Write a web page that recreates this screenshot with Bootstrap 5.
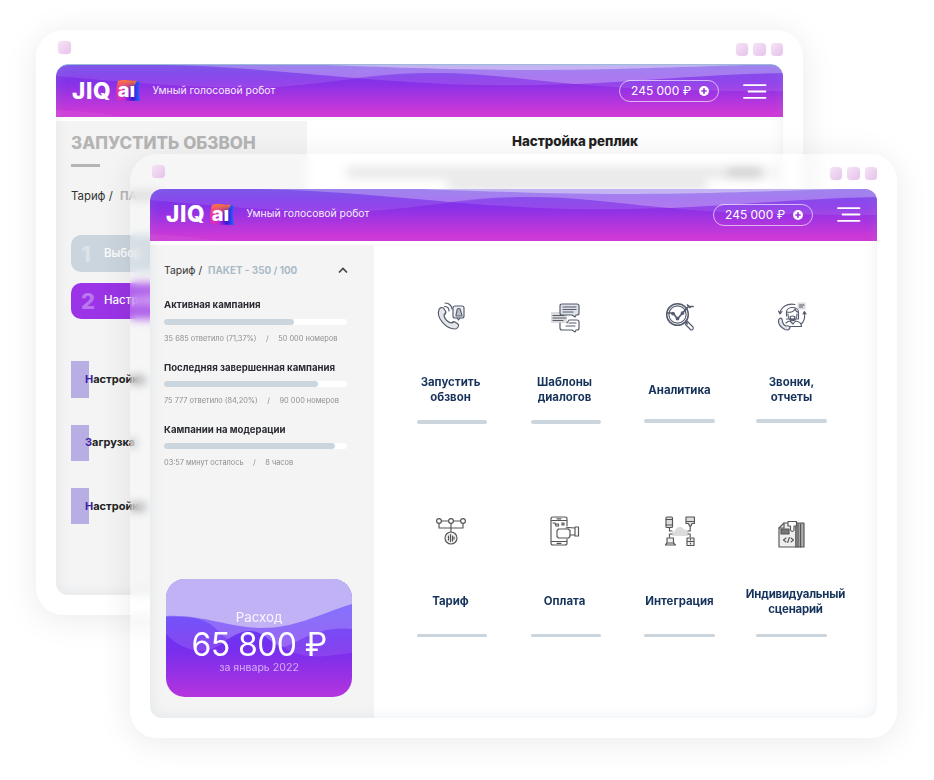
<!DOCTYPE html>
<html lang="ru">
<head>
<meta charset="utf-8">
<meta name="viewport" content="width=device-width, initial-scale=1">
<title>JIQ ai</title>
<link href="https://cdn.jsdelivr.net/npm/bootstrap@5.3.0/dist/css/bootstrap.min.css" rel="stylesheet">
<style>
body{width:934px;height:780px;overflow:hidden;background:#fff;font-family:Inter,"Open Sans",sans-serif;position:relative;line-height:1}
.win{position:absolute;width:767px;height:585px;border-radius:27px;padding:0 20px 20px}
.win-back{left:36px;top:30px;background:#fff;box-shadow:0 4px 34px rgba(0,0,0,.085)}
.win-front{left:130px;top:154px;height:584px;background:rgba(255,255,255,.2);-webkit-backdrop-filter:blur(5px);backdrop-filter:blur(5px);box-shadow:0 4px 34px rgba(0,0,0,.085)}
.chrome{height:35px;padding:11px 0 0 2px}
.win-front .chrome{height:34.5px}
.dot{width:12.5px;height:12.5px;border-radius:4px;background:linear-gradient(135deg,#f5e4f5,#e6c2ec);box-shadow:0 0 1px #f0d8f2}
.chrome .trio{gap:4.8px;padding-top:2px}
.screen{height:530px;border-radius:12px;overflow:hidden;background:#fff;position:relative}
.win-front .screen{height:529.5px}
.screen::after{content:"";position:absolute;inset:0;border-radius:12px;box-shadow:inset 0 0 14px rgba(150,170,190,.2);pointer-events:none}
.win-back .screen{box-shadow:0 -1px 0 -.3px #7aa6cf}
.topbar{height:52px;color:#fff;position:relative;padding:1px 16px 0 16px;border-bottom:1px solid #dc9be6}
.topbar .waves{position:absolute;left:0;top:0}
.topbar>div{position:relative}
.logo-text{font-weight:800;font-size:22.5px;letter-spacing:.7px;width:40px}
.logo-ai{width:25px;height:22px;margin-left:3px}
.slogan{font-size:10.4px;margin-left:12.5px;opacity:.92}
.balance{width:100px;height:22px;border:1.4px solid rgba(255,255,255,.62);border-radius:12px;font-size:12px;padding-left:11px;margin-left:auto}
.burger{margin-left:24px;width:24px}
.side{background:#f4f4f4;margin-top:4px}
.side-back{width:251px;padding:13px 15px 0}
.side-front{width:224px;padding:0 14px}
.hd{font-weight:800;font-size:17px;line-height:18px;color:#b5b5b5;white-space:nowrap}
.rule{width:29px;height:2.5px;background:#b5b5b5;margin-top:12px}
.plan{font-size:11.4px;color:#333;white-space:nowrap}
.step{height:36.5px;width:200px;border-radius:10px;color:#fff;font-size:11.5px;font-weight:500}
.step b{font-size:22px;font-weight:800;width:33px;padding-left:10px;opacity:.32}
.s1{background:#cad5de}.s2{background:#9a34e6}
.pick{height:36.5px;margin-bottom:26.7px;font-size:11px;font-weight:700;color:#222}
.pick i{width:18px;height:36.5px;background:#b9aee3;margin-right:-4px}
.pick span::first-letter{color:#3a1ea8}
.ttl{font-size:13.3px;font-weight:800;color:#222}
.faint{background:#e2e2e2;height:11px}
.faint.first{background:linear-gradient(90deg,#e2e2e2 88%,#c4c4c4 89%,#c4c4c4 96%,#f2f2f2 97%);margin:19px 0 0 -20px;width:430px}
.faint.second{margin:2px 0 0 80px;width:260px}
.camp{font-weight:700;font-size:9.6px;color:#2a2c33;white-space:nowrap;margin-top:19.500px}
.meter{height:6px;background:#fff;border-radius:3px;width:183px;margin-top:9px}
.meter div{height:6px;background:#cad5de;border-radius:3px}
.det{font-size:7.4px;line-height:8px;color:#8e8e8e;white-space:nowrap;margin-top:10px}
.det i{font-style:normal;margin:0 9.5px}
.spend{width:186px;height:118.5px;border-radius:19px;overflow:hidden;position:absolute;left:16px;bottom:21px;color:#fff;text-align:center}
.spend svg.bg{position:absolute;left:0;top:0}
.spend>div{position:relative}
.tiles{display:grid;grid-template-columns:114px 114px 113px 111px;grid-template-rows:215px 215px;padding:47px 0 0 21px}
.tile{text-align:center}
.tile .ic{height:56px;display:flex;align-items:center;justify-content:center}
.tile .cap{height:45px;margin-top:24px;display:flex;align-items:center;justify-content:center;font-weight:700;font-size:11.4px;line-height:14.7px;color:#16335b;white-space:nowrap}
.tile .ul{width:70.5px;height:3.6px;border-radius:2px;background:#cad5de;margin:7.5px auto 0}
.tile.up .ul{margin-top:6.500px}
.tile.g .cap{margin-top:20.5px}
.tile.g .ul{margin-top:9.5px}
.tile .nudge{margin-right:3px}
.tile svg{fill:none;stroke:#545b6c;stroke-width:1.15;stroke-linecap:round;stroke-linejoin:round}
.tile.g svg{stroke:#555}
.tile.g .ic{padding-top:1px}
.tile.wide .cap{padding-left:8px;letter-spacing:-.2px}
</style>
</head>
<body>
<svg width="0" height="0" class="position-absolute">
<defs>
<linearGradient id="hg" x1="0" y1="0" x2="0" y2="1"><stop offset="0" stop-color="#6c3cec"/><stop offset=".35" stop-color="#8731e8"/><stop offset=".92" stop-color="#cd39d6"/></linearGradient>
<linearGradient id="cg" x1="0" y1="0" x2="0" y2="1"><stop offset=".28" stop-color="#5c3cfa"/><stop offset=".6" stop-color="#782eee"/><stop offset="1" stop-color="#b634dc"/></linearGradient>
<linearGradient id="lg" x1="0" y1="0" x2="1" y2="0"><stop offset="0" stop-color="#f0309c"/><stop offset=".35" stop-color="#c02cd8"/><stop offset=".7" stop-color="#3a14d8"/><stop offset="1" stop-color="#1c6cff"/></linearGradient>
<linearGradient id="lt" x1="0" y1="0" x2="0" y2="1"><stop offset="0" stop-color="#ff7a30"/><stop offset="1" stop-color="#ff5a50" stop-opacity="0"/></linearGradient>
<symbol id="waves" viewBox="0 0 727 52"><rect width="727" height="52" fill="url(#hg)"/>
<g fill="#fff"><path fill-opacity=".1" d="M0,0V11C70,17 150,25 220,22C280,18 320,8 380,8C430,8 470,15 520,19C590,26 660,26 727,26V0Z"/>
<path fill-opacity=".12" d="M110,0C170,1 230,7 300,13C380,20 440,22 530,18.500C600,15 660,9 727,8V0Z"/>
<path fill-opacity=".18" d="M110,0C170,1 230,7 300,13C330,9 350,8 380,8C430,8 470,15 520,19C600,15 660,9 727,8V0Z"/>
<path fill-opacity=".42" d="M270,0C350,3 420,5 470,5C560,5 620,2 690,0Z"/>
<path fill-opacity=".06" d="M0,45Q40,47 70,52H0Z"/></g></symbol>
<symbol id="ai" viewBox="0 0 25 22"><path fill="url(#lg)" d="M3,1C9,-1 18,1 25,1.500C23,8 24,15 25,21C18,20 9,22 3,20C0,16 1,6 3,1Z"/><path fill="url(#lt)" d="M3,1C9,-1 16,1 22,1L16,12H1Z"/><text x="2.800" y="16.500" font-family="Inter,sans-serif" font-weight="800" font-size="20" fill="#fff">aı</text></symbol>
<symbol id="plus" viewBox="0 0 10 10"><circle cx="5" cy="5" r="4.900" fill="#fff"/><path d="M5,2.300V7.700M2.300,5H7.700" stroke="#9a34e0" stroke-width="1.700"/></symbol>
<symbol id="menu" viewBox="0 0 24 15"><path d="M1,1.200H22.500M5.500,7.500H22.500M1,13.800H22.500" stroke="#fff" stroke-width="1.800" stroke-linecap="round"/></symbol>
</defs></svg>

<section class="win win-back">
 <div class="chrome d-flex justify-content-between"><span class="dot"></span><div class="trio d-flex"><span class="dot"></span><span class="dot"></span><span class="dot"></span></div></div>
 <div class="screen">
  <header class="topbar d-flex align-items-center">
   <svg class="waves" width="727" height="52"><use href="#waves"/></svg>
   <div class="logo-text">JIQ</div><div class="logo-ai"><svg width="25" height="22"><use href="#ai"/></svg></div>
   <div class="slogan">Умный голосовой робот</div>
   <div class="balance d-flex align-items-center"><span>245 000 ₽</span><svg class="ms-2" width="10" height="10"><use href="#plus"/></svg></div>
   <div class="burger d-flex"><svg width="24" height="15"><use href="#menu"/></svg></div>
  </header>
  <div class="d-flex h-100">
   <aside class="side side-back">
    <div class="hd">ЗАПУСТИТЬ ОБЗВОН</div>
    <div class="rule"></div>
    <div class="plan" style="margin-top:24.500px">Тариф / <b class="ms-1" style="color:#b5b5b5">ПАКЕТ</b></div>
    <div class="step s1 d-flex align-items-center" style="margin-top:33px"><b>1</b><span>Выбор</span></div>
    <div class="step s2 d-flex align-items-center" style="margin-top:11px"><b>2</b><span>Настройка</span></div>
    <div style="margin-top:42px">
     <div class="pick d-flex align-items-center"><i></i><span>Настройка</span></div>
     <div class="pick d-flex align-items-center"><i></i><span>Загрузка</span></div>
     <div class="pick d-flex align-items-center"><i></i><span>Настройка</span></div>
    </div>
   </aside>
   <main class="flex-grow-1 text-center" style="padding:17.500px 0 0 60px">
    <div class="ttl">Настройка реплик</div>
    <div class="faint first"></div>
    <div class="faint second"></div>
   </main>
  </div>
 </div>
</section>

<section class="win win-front">
 <div class="chrome d-flex justify-content-between"><span class="dot"></span><div class="trio d-flex"><span class="dot"></span><span class="dot"></span><span class="dot"></span></div></div>
 <div class="screen">
  <header class="topbar d-flex align-items-center">
   <svg class="waves" width="727" height="52"><use href="#waves"/></svg>
   <div class="logo-text">JIQ</div><div class="logo-ai"><svg width="25" height="22"><use href="#ai"/></svg></div>
   <div class="slogan">Умный голосовой робот</div>
   <div class="balance d-flex align-items-center"><span>245 000 ₽</span><svg class="ms-2" width="10" height="10"><use href="#plus"/></svg></div>
   <div class="burger d-flex"><svg width="24" height="15"><use href="#menu"/></svg></div>
  </header>
  <div class="d-flex" style="height:477.500px">
   <aside class="side side-front">
    <div class="plan d-flex align-items-center" style="padding-top:21px;font-size:10.400px">Тариф&nbsp;/&nbsp;<b style="color:#a9bbc6;font-size:9.900px;margin-left:3px">ПАКЕТ - 350 / 100</b><svg class="ms-auto" style="margin-right:12px" width="10" height="7" viewBox="0 0 10 7"><path d="M1,5.500L5,1.500L9,5.500" fill="none" stroke="#444" stroke-width="1.700"/></svg></div>
    <div class="camp" style="margin-top:24.500px">Активная кампания</div>
    <div class="meter"><div style="width:71%"></div></div>
    <div class="det">35 685 ответило (71,37%)<i>/</i>50 000 номеров</div>
    <div class="camp">Последняя завершенная кампания</div>
    <div class="meter"><div style="width:84%"></div></div>
    <div class="det">75 777 ответило (84,20%)<i>/</i>90 000 номеров</div>
    <div class="camp">Кампании на модерации</div>
    <div class="meter"><div style="width:93.500%"></div></div>
    <div class="det">03:57 минут осталось<i>/</i>8 часов</div>
    <div class="spend">
     <svg class="bg" width="186" height="119" viewBox="0 0 186 119"><rect width="186" height="119" fill="url(#cg)"/><g fill="#fff"><path fill-opacity=".12" d="M0,0V55C14,70 36,78 54,66C67,56 76,52 84,52C98,52 106,66 117,68C130,66 150,46 186,50V0Z"/><path fill-opacity=".1" d="M117,68C130,78 150,78 160,77C170,76 178,75 186,74V50C150,46 130,66 117,68Z"/><path fill-opacity=".17" d="M0,0V38C24,37 36,40 44,45C52,50 57,58 62,60C70,55 76,52 84,52C98,52 106,66 117,68C130,66 150,46 186,50V0Z"/><path fill="#cbbdf5" fill-opacity=".86" d="M0,0V37C34,35 60,48 95,49C130,49 150,36 186,25V0Z"/></g></svg>
     <div style="padding-top:32px;font-size:13.300px;opacity:.9">Расход</div>
     <div style="font-size:32px;line-height:30px;letter-spacing:-.6px;margin-top:6px;white-space:nowrap">65 800 ₽</div>
     <div style="font-size:10.600px;margin-top:3px;opacity:.6">за январь 2022</div>
    </div>
   </aside>
   <main class="tiles">
    <div class="tile"><div class="ic nudge"><svg width="30" height="30" viewBox="0 0 30 30"><path fill="#e4e6ea" d="M3,8.500C4,6.500 6,6 7.500,7L10,11C10,13 8,14 8,15C9,18 12,21 15,22C16.500,22 17.500,20.500 19,21L22.500,23.500C23,25.500 21,28 19,28C10,28 0,17 3,8.500ZM10,11L8,14M15,22L17.500,20.500"/><path d="M8.500,5.500C12,5.500 13,8 13,10M9,2C14,2 16,6 16,8"/><rect x="17" y="5" width="11" height="12" rx="2" fill="#eef0f3"/><path fill="#b9bec8" d="M20,15C20,12 21,11 21,9C21,7 24.500,7 24.500,9C24.500,11 26,12 26,15Z"/><path d="M21,17L22.500,19L24,17"/></svg></div><div class="cap nudge">Запустить<br>обзвон</div><div class="ul"></div></div>
    <div class="tile"><div class="ic"><svg class="mt-1" width="30" height="30" viewBox="0 0 30 30"><rect x="0" y="9" width="16" height="11" fill="#dcdcdc" stroke="none"/><path fill="#dfe1e6" d="M11,1H26Q28,1 28,3V10Q28,12 26,12H25L24,14L21,12H11Q9,12 9,10V3Q9,1 11,1Z"/><path d="M12,4H25M12,6.500H25M12,9H22M2,12.500H13M2,15H15M2,17.500H12"/><path d="M19,17H26Q28,17 28,19V25Q28,27 26,27H25L24,29L21,27H11Q9,27 9,25V20M18,20H25M15,23H24M18,17L16,20"/></svg></div><div class="cap nudge">Шаблоны<br>диалогов</div><div class="ul"></div></div>
    <div class="tile up"><div class="ic"><svg width="30" height="30" viewBox="0 0 30 30"><circle cx="12.500" cy="13.500" r="10.800" stroke-width="1.500"/><circle cx="12.500" cy="13.500" r="8.600"/><path d="M20.500,21L22.500,23M22,20L28,26Q29,29 26,29L20.500,23.500Z"/><path stroke-width="1.700" d="M2,12H5.500L8.500,12.500L12.500,18L17.500,12L23.500,5.500H28M22.500,4L25,6.500"/><circle cx="8" cy="12.500" r="1.300"/><circle cx="17.500" cy="12" r="1.300"/><circle cx="12.500" cy="17.500" r="1.300"/></svg></div><div class="cap">Аналитика</div><div class="ul"></div></div>
    <div class="tile up"><div class="ic"><svg width="30" height="30" viewBox="0 0 30 30"><rect x="20.500" y="1.500" width="8" height="7" fill="#dcdcdc" stroke="none"/><path d="M22.500,4H27M22.500,6H25.500M3,12C4,6 10,2 18,3.500M1.500,10L3,13L5,10.500M27.500,12C28,17 27,21 24,23M26,13L27.500,10.500L29,13"/><path d="M9.500,15V11C9.500,5 21.500,5 21.500,11V18H9.500M10,11C14,12 17,10 18,8Q19,11 21.500,11.500M11,13C11,22 20,22 20,13M13,16Q15.500,14 18,16L16.500,19H14.500Z"/><path d="M9,22Q11,20 13,20L16,23L18.500,20C23,20.500 24.500,23 24.500,25.500H13"/><path fill="#e4e6ea" d="M1.500,19Q3,16 5,18L5.500,20.500Q6,24 9,25Q12,24 13,26.500Q12,30 8,28.500Q1,25 1.500,19Z"/></svg></div><div class="cap">Звонки,<br>отчеты</div><div class="ul"></div></div>
    <div class="tile g"><div class="ic nudge"><svg width="30" height="30" viewBox="0 0 30 30"><path d="M5.500,5H12.500M17.500,5H24.500M3,7.500V12H27V7.500M15,7.500V16"/><circle cx="3" cy="5" r="2.400"/><circle cx="15" cy="5" r="2.400"/><circle cx="27" cy="5" r="2.400"/><circle cx="15" cy="22" r="6" fill="#eee"/><path d="M12.500,20V24M14.500,18.500V25.500M16.500,20V25M18,21V23"/></svg></div><div class="cap nudge">Тариф</div><div class="ul"></div></div>
    <div class="tile g"><div class="ic nudge"><svg width="30" height="30" viewBox="0 0 30 30"><path d="M17,10V3Q17,1 15,1H3Q1,1 1,3V27Q1,29 3,29H15Q17,29 17,27V23M1,4.500H17M1,25.500H17M7,2.800H11M7,27.300H11"/><path d="M3,7H5L6,10H8.500V8H5.500M12,7H14V9H12Z"/><path fill="#fff" d="M7,14.500L8.500,13H18L20,14.500V20.500L18.500,22H8.500L7,20.500Z"/><path d="M16,12L18,11.500L25,12M20,19H25M25,11H28.500V20H25Z"/></svg></div><div class="cap nudge">Оплата</div><div class="ul"></div></div>
    <div class="tile g"><div class="ic"><svg width="30" height="30" viewBox="0 0 30 30"><path fill="#dcdcdc" stroke="none" d="M9,20C5,20 6,15 9.500,15.500C11,10 17,9 19,13.500C24,13 26,20 21,20Z"/><rect x="1" y="1" width="6.500" height="10.500" rx="1" fill="#ddd"/><path d="M1,3.500H7.500M1,9H7.500M4.500,11.500V15H7M4.500,21V18H7M25.200,10V15H23M25.200,21V18H23"/><path fill="#ddd" d="M21,1H29.500V7.500H27L26,10H24.500L23.500,7.500H21ZM21,5.500H29.500"/><path fill="#eee" d="M2,22H8.500V27H2ZM0,29H10.500L8.500,27H2ZM22,22H29V29.500H22ZM22,25.500H29M25.500,23V24M25.500,27V28"/></svg></div><div class="cap">Интеграция</div><div class="ul"></div></div>
    <div class="tile g wide"><div class="ic pt-2"><svg width="30" height="30" viewBox="0 0 30 30"><path fill="#eee" d="M2,27V8L7,3H19V27Z"/><rect x="19" y="3" width="8" height="24" fill="#ababab"/><path d="M21,4V27M23.500,4V27M7,3V8H2"/><rect x="4" y="9" width="8" height="5" fill="#777"/><path fill="#fff" d="M11,1.500H19.500V6H17V10Q15.200,13 13.500,10V6H11Z"/><path d="M9,18L6.500,20L9,22M14,18L16.500,20L14,22M12.300,17.500L10.700,22.500"/></svg></div><div class="cap">Индивидуальный<br>сценарий</div><div class="ul"></div></div>
   </main>
  </div>
 </div>
</section>
<script src="https://cdn.jsdelivr.net/npm/bootstrap@5.3.0/dist/js/bootstrap.bundle.min.js"></script>
</body>
</html>
